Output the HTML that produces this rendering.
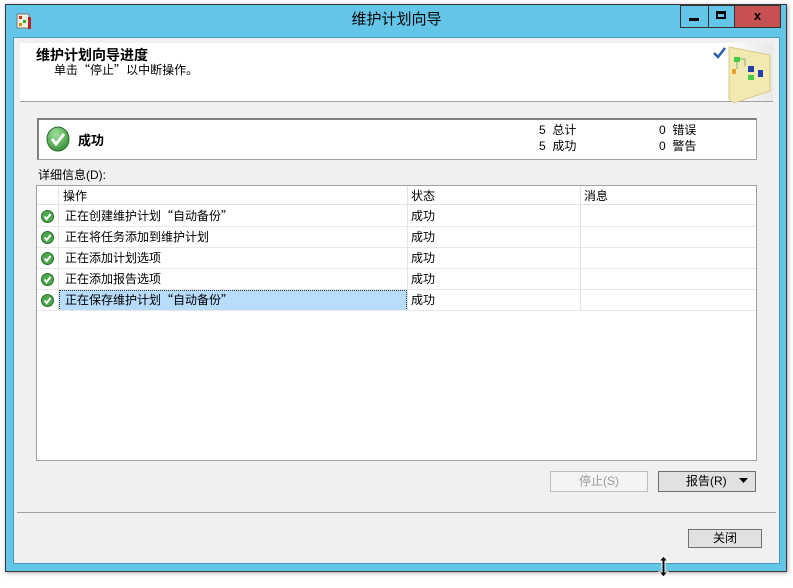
<!DOCTYPE html>
<html><head><meta charset="utf-8"><style>
*{margin:0;padding:0;box-sizing:border-box}
body{width:793px;height:588px;background:#fff;font-family:"Liberation Sans","Noto Sans CJK SC",sans-serif;font-size:12px;color:#000;position:relative;overflow:hidden}
.a{position:absolute}
.t{white-space:nowrap;line-height:14px}
.q{font-family:"Noto Sans CJK SC",sans-serif}
</style></head><body>
<!-- window frame -->
<div class="a" style="left:5px;top:4px;width:782px;height:568px;background:#63c6e8;border:1px solid #3a3a3a;box-shadow:1px 1px 4px rgba(0,0,0,.35)"></div>
<!-- title icon -->
<svg class="a" style="left:15px;top:12px" width="18" height="18" viewBox="0 0 18 18">
<rect x="2" y="2" width="12" height="14" fill="#f4f0e0" stroke="#777"/>
<rect x="4" y="4" width="3" height="3" fill="#c33"/><rect x="8" y="8" width="3" height="3" fill="#3a3"/><rect x="4" y="11" width="3" height="3" fill="#c80"/>
<rect x="13" y="5" width="3" height="12" fill="#b22"/>
</svg>
<div class="a t" style="left:0;width:793px;top:13px;text-align:center;font-size:15px;color:#000">维护计划向导</div>
<!-- buttons -->
<div class="a" style="left:680px;top:5px;width:29px;height:23px;border:1px solid #333;border-right:none;background:#63c6e8"></div>
<div class="a" style="left:689px;top:18px;width:10px;height:3px;background:#000"></div>
<div class="a" style="left:708px;top:5px;width:27px;height:23px;border:1px solid #333;border-right:none;background:#63c6e8"></div>
<div class="a" style="left:716px;top:11px;width:10px;height:8px;border:2px solid #000;border-top-width:3px"></div>
<div class="a" style="left:734px;top:5px;width:47px;height:23px;border:1px solid #333;background:#c75050;color:#000;font-weight:bold;font-size:13px;text-align:center;line-height:20px">x</div>
<!-- client -->
<div class="a" style="left:13px;top:37px;width:767px;height:527px;background:#f0f0f0;border:1px solid #4a9ab8"></div>
<div class="a" style="left:20px;top:43px;width:753px;height:59px;background:#fff;border-bottom:1px solid #a0a0a0"></div>
<div class="a" style="left:727px;top:43px;width:46px;height:58px;background:linear-gradient(90deg,#fff,#e8e8e8)"></div>
<div class="a t" style="left:36px;top:48px;font-size:14px;font-weight:bold">维护计划向导进度</div>
<div class="a t" style="left:54px;top:63px">单击<span class="q">“</span>停止<span class="q">”</span>以中断操作。</div>
<svg class="a" style="left:712px;top:45px" width="60" height="58" viewBox="0 0 60 58">
<path d="M2 8 L6 12 L13 3" stroke="#2f5fb0" stroke-width="2.5" fill="none"/>
<path d="M17 2 L58 10 L58 46 L22 58 L17 54 Z" fill="#f1e9b0" stroke="#d8cc88"/>
<rect x="22" y="12" width="6" height="5" fill="#4c4"/><rect x="36" y="21" width="6" height="6" fill="#2340b0"/><rect x="46" y="25" width="5" height="7" fill="#2340b0"/><rect x="36" y="30" width="6" height="5" fill="#4c4"/><rect x="20" y="24" width="4" height="5" fill="#e8a030"/>
<path d="M25 17 V24 M28 14 H33 V21" stroke="#8a8" fill="none"/>
</svg>
<!-- summary -->
<div class="a" style="left:37px;top:118px;width:720px;height:42px;background:#fff;border:1px solid #a0a0a0;border-top:2px solid #808080;border-left:2px solid #808080"></div>
<svg class="a" style="left:45px;top:126px" width="26" height="26" viewBox="0 0 26 26">
<defs><radialGradient id="g" cx=".4" cy=".3" r=".8"><stop offset="0" stop-color="#9fe09a"/><stop offset="1" stop-color="#2e8a2e"/></radialGradient></defs>
<ellipse cx="13" cy="13" rx="11" ry="12" fill="url(#g)" stroke="#2a6a2a"/>
<path d="M7 13 L11 18 L19 8" stroke="#fff" stroke-width="3" fill="none"/>
</svg>
<div class="a t" style="left:78px;top:134px;font-weight:bold;font-size:13px">成功</div>
<div class="a t" style="left:539px;top:123px">5&nbsp;&nbsp;总计</div>
<div class="a t" style="left:539px;top:139px">5&nbsp;&nbsp;成功</div>
<div class="a t" style="left:659px;top:123px">0&nbsp;&nbsp;错误</div>
<div class="a t" style="left:659px;top:139px">0&nbsp;&nbsp;警告</div>
<div class="a t" style="left:38px;top:168px">详细信息(D):</div>
<!-- grid -->
<div class="a" style="left:36px;top:185px;width:721px;height:276px;background:#fff;border:1px solid #a0a0a0"></div>
<div class="a" style="left:37px;top:186px;width:719px;height:19px;border-bottom:1px solid #e4e4e4"></div>
<div class="a" style="left:58px;top:186px;width:1px;height:125px;background:#e4e4e4"></div>
<div class="a" style="left:407px;top:186px;width:1px;height:125px;background:#e4e4e4"></div>
<div class="a" style="left:580px;top:186px;width:1px;height:125px;background:#e4e4e4"></div>
<div class="a t" style="left:63px;top:189px">操作</div>
<div class="a t" style="left:411px;top:189px">状态</div>
<div class="a t" style="left:584px;top:189px">消息</div>
<div class="a" style="left:59px;top:290px;width:348px;height:21px;background:#b8dcfc;border:1px dotted #333"></div>
<div id="rows"></div>
<script>
var r=['正在创建维护计划<span class="q">“</span>自动备份<span class="q">”</span>','正在将任务添加到维护计划','正在添加计划选项','正在添加报告选项','正在保存维护计划<span class="q">“</span>自动备份<span class="q">”</span>'],h="";
for(var i=0;i<5;i++){var y=206+i*21;
h+='<div class="a" style="left:37px;top:'+(y+20)+'px;width:719px;height:1px;background:#e8e8e8"></div>';
h+='<svg class="a" style="left:41px;top:'+(y+4)+'px" width="13" height="13" viewBox="0 0 13 13"><circle cx="6.5" cy="6.5" r="6" fill="#4ca84c" stroke="#2c6c2c"/><path d="M3.5 6.5 L5.7 9 L9.5 4" stroke="#fff" stroke-width="2" fill="none"/></svg>';
h+='<div class="a t" style="left:65px;top:'+(y+3)+'px">'+r[i]+'</div><div class="a t" style="left:411px;top:'+(y+3)+'px">成功</div>';}
document.getElementById("rows").innerHTML=h;
</script>
<!-- buttons -->
<div class="a t" style="left:550px;top:471px;width:98px;height:21px;border:1px solid #bfbfbf;background:#f4f4f4;color:#9a9a9a;text-align:center;line-height:19px">停止(S)</div>
<div class="a t" style="left:658px;top:471px;width:98px;height:21px;border:1px solid #707070;background:#e1e1e1;line-height:19px;padding-left:27px">报告(R)</div>
<svg class="a" style="left:739px;top:478px" width="9" height="6"><path d="M0 0 H9 L4.5 5 Z" fill="#000"/></svg>
<div class="a" style="left:17px;top:512px;width:759px;height:1px;background:#a0a0a0"></div>
<div class="a t" style="left:688px;top:529px;width:74px;height:19px;border:1px solid #707070;background:#e1e1e1;text-align:center;line-height:17px">关闭</div>
<!-- cursor -->
<svg class="a" style="left:657px;top:555px" width="13" height="23" viewBox="0 0 13 23">
<path d="M6.5 1 L11 6 H8 V17 H11 L6.5 22 L2 17 H5 V6 H2 Z" fill="#000" stroke="#fff"/>
</svg>
</body></html>
